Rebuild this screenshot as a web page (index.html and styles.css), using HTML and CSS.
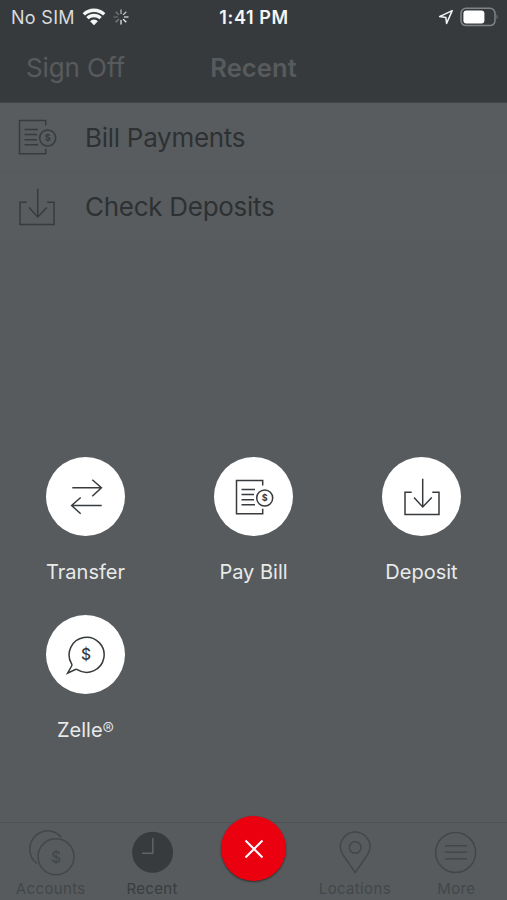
FILE: index.html
```html
<!DOCTYPE html>
<html lang="en">
<head>
    <meta charset="UTF-8">
    <title>Recent</title>
    <link rel="stylesheet" href="styles.css">
</head>
<body>
    <!-- Icons used more than once -->
    <svg class="sprite">
        <symbol id="bill" viewBox="0 0 40 40">
            <path d="M28.7 8.5V3.5H2.5V36.8H28.7V31.8M7.5 12.5H21M7.5 17.5H20M7.5 22.8H20M7.5 27.8H21"/>
            <circle cx="30.7" cy="21" r="8"/>
            <text class="coin-text" x="30.7" y="24.3">$</text>
        </symbol>
        <symbol id="deposit" viewBox="0 0 40 40">
            <path d="M9.7 15.2H3V37.5H37V15.2H30.3M20.7 1.8V30M12 20.5L20.7 30L29.8 20.5"/>
        </symbol>
    </svg>

    <div class="screen">
        <header class="header">
            <div class="status">
                <div class="status-left">
                    <span class="carrier">No SIM</span>
                    <svg class="wifi" width="24" height="18" viewBox="0 0 24 18">
                        <path d="M1.8 6.4a14.6 14.6 0 0 1 20.4 0M5.4 10.2a9.4 9.4 0 0 1 13.2 0"/>
                        <path class="solid" d="M8.1 13.2a5.6 5.6 0 0 1 7.8 0L12 17.2z"/>
                    </svg>
                    <svg class="spinner" width="16" height="16" viewBox="0 0 16 16">
                        <path d="M8 .5V5" opacity=".65"/>
                        <path d="M13.3 2.7L10.1 5.9" opacity=".75"/>
                        <path d="M15.5 8H11" opacity=".85"/>
                        <path d="M13.3 13.3L10.1 10.1"/>
                        <path d="M8 15.5V11" opacity=".9"/>
                        <path d="M2.7 13.3L5.9 10.1" opacity=".4"/>
                        <path d="M.5 8H5" opacity=".25"/>
                        <path d="M2.7 2.7L5.9 5.9" opacity=".35"/>
                    </svg>
                </div>
                <span class="time">1:41 PM</span>
                <div class="status-right">
                    <svg class="location" width="16" height="16" viewBox="0 0 16 16">
                        <path d="M14.2 1.6L1.6 7.6L7.8 8.4L8.6 14.4z"/>
                    </svg>
                    <svg class="battery" width="39" height="20" viewBox="0 0 39 20">
                        <rect class="battery-shell" x="1" y="1.2" width="34" height="17.4" rx="5"/>
                        <rect class="battery-level" x="3.4" y="3.6" width="21" height="12.8" rx="3"/>
                        <path class="battery-cap" d="M36.6 7.2q2 2.7 0 5.4z"/>
                    </svg>
                </div>
            </div>
            <div class="nav">
                <span class="sign-off">Sign Off</span>
                <h1 class="title">Recent</h1>
            </div>
        </header>

        <main class="list">
            <div class="row">
                <svg class="icon"><use href="#bill"/></svg>
                <span class="row-label">Bill Payments</span>
            </div>
            <div class="row">
                <svg class="icon"><use href="#deposit"/></svg>
                <span class="row-label">Check Deposits</span>
            </div>
        </main>

        <!-- Quick actions -->
        <div class="actions">
            <div class="action">
                <div class="bubble">
                    <svg class="icon" viewBox="0 0 40 40">
                        <path d="M6.3 10.8H35.7M26.3 2.8L35.4 10.8L26.3 19.2M35.7 28.5H5.3M14.7 20.5L5.6 28.5L14.7 36.8"/>
                    </svg>
                </div>
                <span class="action-label">Transfer</span>
            </div>
            <div class="action">
                <div class="bubble"><svg class="icon"><use href="#bill"/></svg></div>
                <span class="action-label">Pay Bill</span>
            </div>
            <div class="action">
                <div class="bubble"><svg class="icon"><use href="#deposit"/></svg></div>
                <span class="action-label">Deposit</span>
            </div>
            <div class="action">
                <div class="bubble">
                    <svg class="icon" viewBox="0 0 40 40">
                        <path d="M5.5 28.6A17.5 17.5 0 1 1 11.3 34.6Q10.3 34 8.8 34.7L1.6 38.1L5.6 31Q6.2 29.8 5.5 28.6z"/>
                        <text class="dollar" x="20" y="25">$</text>
                    </svg>
                </div>
                <span class="action-label">Zelle<span class="mark">®</span></span>
            </div>
        </div>

        <nav class="tabs">
            <div class="tab">
                <svg class="tab-icon" width="50" height="46" viewBox="0 0 50 46">
                    <path d="M35.5 7.2A18 18 0 0 0 3.8 18.9A18 18 0 0 0 11 33.5"/>
                    <circle cx="30" cy="26.7" r="18"/>
                    <text class="dollar" x="30" y="32.5">$</text>
                </svg>
                <span class="tab-label">Accounts</span>
            </div>
            <div class="tab">
                <svg class="tab-icon" width="50" height="46" viewBox="0 0 50 46">
                    <circle class="clock" cx="25.6" cy="22.3" r="20.5"/>
                    <path class="hands" d="M25.8 8V23.2H15"/>
                </svg>
                <span class="tab-label current">Recent</span>
            </div>
            <div class="tab">
                <button class="close" aria-label="Close">
                    <svg width="20" height="20" viewBox="0 0 20 20"><path d="M1.5 1.5L18.5 18.5M18.5 1.5L1.5 18.5"/></svg>
                </button>
            </div>
            <div class="tab">
                <svg class="tab-icon" width="50" height="46" viewBox="0 0 50 46">
                    <path d="M25.2 42.5L13.4 25.5Q10.3 21 10.3 17A14.9 14.9 0 0 1 40.1 17Q40.1 21 37 25.5z"/>
                    <circle cx="25.2" cy="17.5" r="5.8"/>
                </svg>
                <span class="tab-label">Locations</span>
            </div>
            <div class="tab">
                <svg class="tab-icon" width="50" height="46" viewBox="0 0 50 46">
                    <circle cx="24.6" cy="22.5" r="20"/>
                    <path d="M14 15.8H36M14 22.3H36M14 28.8H36"/>
                </svg>
                <span class="tab-label">More</span>
            </div>
        </nav>
    </div>
</body>
</html>
```
FILE: styles.css
```css
* {
    box-sizing: border-box;
}
body {
    margin: 0;
    font-family: Inter, "Liberation Sans", sans-serif;
    background: #575b5d;
}
svg {
    display: block;
    flex: none;
    fill: none;
    stroke: currentColor;
}
.sprite {
    display: none;
}
.screen {
    display: flex;
    flex-direction: column;
    height: 900px;
    overflow: hidden;
    color: #373b3d;
}
.header {
    height: 103px;
    background: #373a3c;
    border-bottom: 1px solid #414547;
}
.status {
    display: grid;
    grid-template-columns: 1fr auto 1fr;
    align-items: center;
    height: 34px;
    padding: 0 8px 0 11px;
    color: #f4f5f5;
}
.status-left, .status-right {
    display: flex;
    align-items: center;
}
.status-right {
    justify-content: flex-end;
    gap: 6px;
}
.carrier {
    width: 71px;
    font-size: 18px;
    letter-spacing: 0.3px;
    white-space: nowrap;
    color: #d9dbdc;
}
.time {
    padding-right: 2px;
    font-size: 18px;
    font-weight: 600;
    letter-spacing: 0.6px;
}
.wifi {
    stroke-width: 3.3;
}
.wifi .solid {
    fill: currentColor;
    stroke: none;
}
.spinner {
    margin-left: 7px;
    stroke-width: 1.3;
}
.location {
    stroke-width: 1.5;
    stroke-linejoin: round;
}
.battery-shell {
    stroke: #808385;
    stroke-width: 1.5;
}
.battery-level {
    fill: #fff;
    stroke: none;
}
.battery-cap {
    fill: #808385;
    stroke: none;
}
.nav {
    display: grid;
    grid-template-columns: 1fr auto 1fr;
    align-items: center;
    height: 67px;
    padding: 0 26px;
    color: #575b5d;
    font-size: 26px;
    letter-spacing: -0.1px;
}
.title {
    margin: 0;
    font-size: 25.5px;
    font-weight: 600;
    letter-spacing: 0.1px;
}
.list {
    flex: 1;
}
.row {
    display: flex;
    align-items: center;
    gap: 28px;
    height: 69.5px;
    padding-left: 17px;
    border-bottom: 1px solid #56595b;
    background: #595c5e;
}
.row-label {
    font-size: 26px;
    letter-spacing: -0.28px;
    color: #2d3133;
}
.icon {
    width: 40px;
    height: 40px;
    stroke-width: 1.5;
}
.coin-text {
    font-size: 9px;
    font-weight: 700;
    text-anchor: middle;
    fill: currentColor;
    stroke: none;
}
.dollar {
    font-size: 15.5px;
    font-weight: 500;
    text-anchor: middle;
    fill: currentColor;
    stroke: none;
}
.actions {
    display: grid;
    grid-template-columns: repeat(3, 168px);
    grid-auto-rows: 158px;
    height: 365px;
    padding-left: 1.5px;
}
.action {
    display: flex;
    flex-direction: column;
    align-items: center;
}
.bubble {
    display: flex;
    align-items: center;
    justify-content: center;
    width: 79px;
    height: 79px;
    border-radius: 50%;
    background: #fff;
}
.action-label {
    margin-top: 23px;
    font-size: 20px;
    line-height: 26px;
    white-space: nowrap;
    color: #e8eaea;
}
.mark {
    font-size: 17px;
    font-weight: 300;
    line-height: 1;
    vertical-align: 2px;
}
.tabs {
    display: grid;
    grid-template-columns: repeat(5, 1fr);
    height: 78px;
    border-top: 1px solid #4d5153;
    color: #43474a;
}
.tab {
    display: flex;
    flex-direction: column;
    align-items: center;
    padding-top: 7px;
}
.tab-icon {
    stroke-width: 1.5;
}
.clock {
    fill: #373b3d;
    stroke: none;
}
.hands {
    stroke: #606466;
}
.tab-label {
    margin-top: 4px;
    font-size: 15px;
    line-height: 18px;
    letter-spacing: 0.35px;
    white-space: nowrap;
}
.tab-label.current {
    color: #393d3f;
}
.close {
    display: flex;
    align-items: center;
    justify-content: center;
    flex: none;
    width: 65px;
    height: 65px;
    margin: -14px 0 0 1px;
    padding: 0;
    border: none;
    border-radius: 50%;
    background: #eb0010;
    color: #fff;
    stroke-width: 2;
    box-shadow: 0 1px 2px rgba(0, 0, 0, 0.5);
}
```
